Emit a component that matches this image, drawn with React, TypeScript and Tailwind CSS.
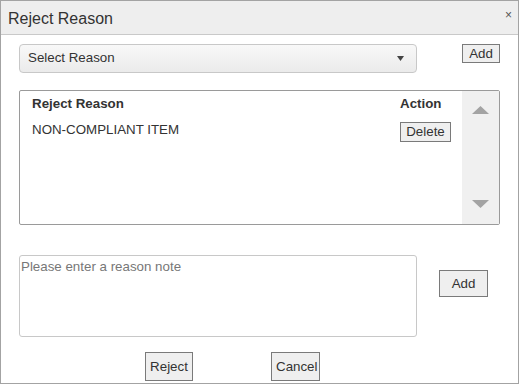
import React from "react";

const font = "font-['Liberation_Sans',Arial,sans-serif]";

function Btn({ children, className = "" }: { children: React.ReactNode; className?: string }) {
  return (
    <button className={`flex items-center justify-center border border-[#7a7a7a] bg-[#efefef] text-[13.33px] leading-none text-[#333] ${className}`}>
      {children}
    </button>
  );
}

export default function App() {
  return (
    <div className={`${font} flex h-[384px] w-[519px] flex-col border border-[#a3a3a3] bg-white`}>
      <div className="flex h-[34px] items-center justify-between border-b border-[#c9c9c9] bg-[#eeeeee] pl-[7px] pr-[6px] pt-[2px]">
        <span className="text-[16px] text-[#333]">Reject Reason</span>
        <span className="-mt-[8px] text-[12px] text-[#555]">×</span>
      </div>

      <div className="mt-[9px] flex items-start pl-[18px]">
        <div className="flex h-[29px] w-[398px] items-center justify-between rounded-[4px] border border-[#c8c8c8] bg-gradient-to-b from-[#f8f8f8] to-[#ebebeb] pb-[1px] pl-[8px] pr-[12px]">
          <span className="text-[13.33px] text-[#333]">Select Reason</span>
          <svg width="7" height="5" viewBox="0 0 7 5"><path d="M0 0h7L3.5 5z" fill="#444" /></svg>
        </div>
        <Btn className="ml-[45px] h-[19px] w-[38px]">Add</Btn>
      </div>

      <div className="ml-[18px] mt-[17px] flex h-[135px] w-[481px] rounded-[2px] border border-[#9a9a9a]">
        <div className="flex-1">
          <div className="grid grid-cols-[380px_1fr] pt-[5px] text-[13.33px] text-[#333]">
            <div className="h-[16px] pl-[12px] font-bold leading-[16px]">Reject Reason</div>
            <div className="h-[16px] font-bold leading-[16px]">Action</div>
            <div className="mt-[10px] pl-[12px] leading-[16px]">NON-COMPLIANT ITEM</div>
            <div className="mt-[10px]">
              <Btn className="h-[20px] w-[51px]">Delete</Btn>
            </div>
          </div>
        </div>
        <div className="flex w-[37px] flex-col items-center justify-between bg-[#f0f0f0] pb-[16px] pt-[15px]">
          <svg width="17" height="8" viewBox="0 0 17 8"><path d="M0 8h17L8.5 0z" fill="#a3a3a3" /></svg>
          <svg width="17" height="8" viewBox="0 0 17 8"><path d="M0 0h17L8.5 8z" fill="#a3a3a3" /></svg>
        </div>
      </div>

      <div className="mt-[30px] flex items-start pl-[18px]">
        <div className="h-[82px] w-[398px] rounded-[3px] border border-[#c8c8c8] pl-[1px] pt-[3px] text-[13.33px] leading-[16px] text-[#777]">
          Please enter a reason note
        </div>
        <Btn className="ml-[22px] mt-[15px] h-[27px] w-[49px]">Add</Btn>
      </div>

      <div className="mt-[15px] flex pl-[144px]">
        <Btn className="h-[29px] w-[48px]">Reject</Btn>
        <button className="ml-[78px] flex h-[29px] w-[49px] items-center justify-start overflow-hidden whitespace-nowrap border border-[#7a7a7a] bg-[#efefef] pl-[4px] text-[13.33px] leading-none text-[#333]">
          Cancel
        </button>
      </div>
    </div>
  );
}
